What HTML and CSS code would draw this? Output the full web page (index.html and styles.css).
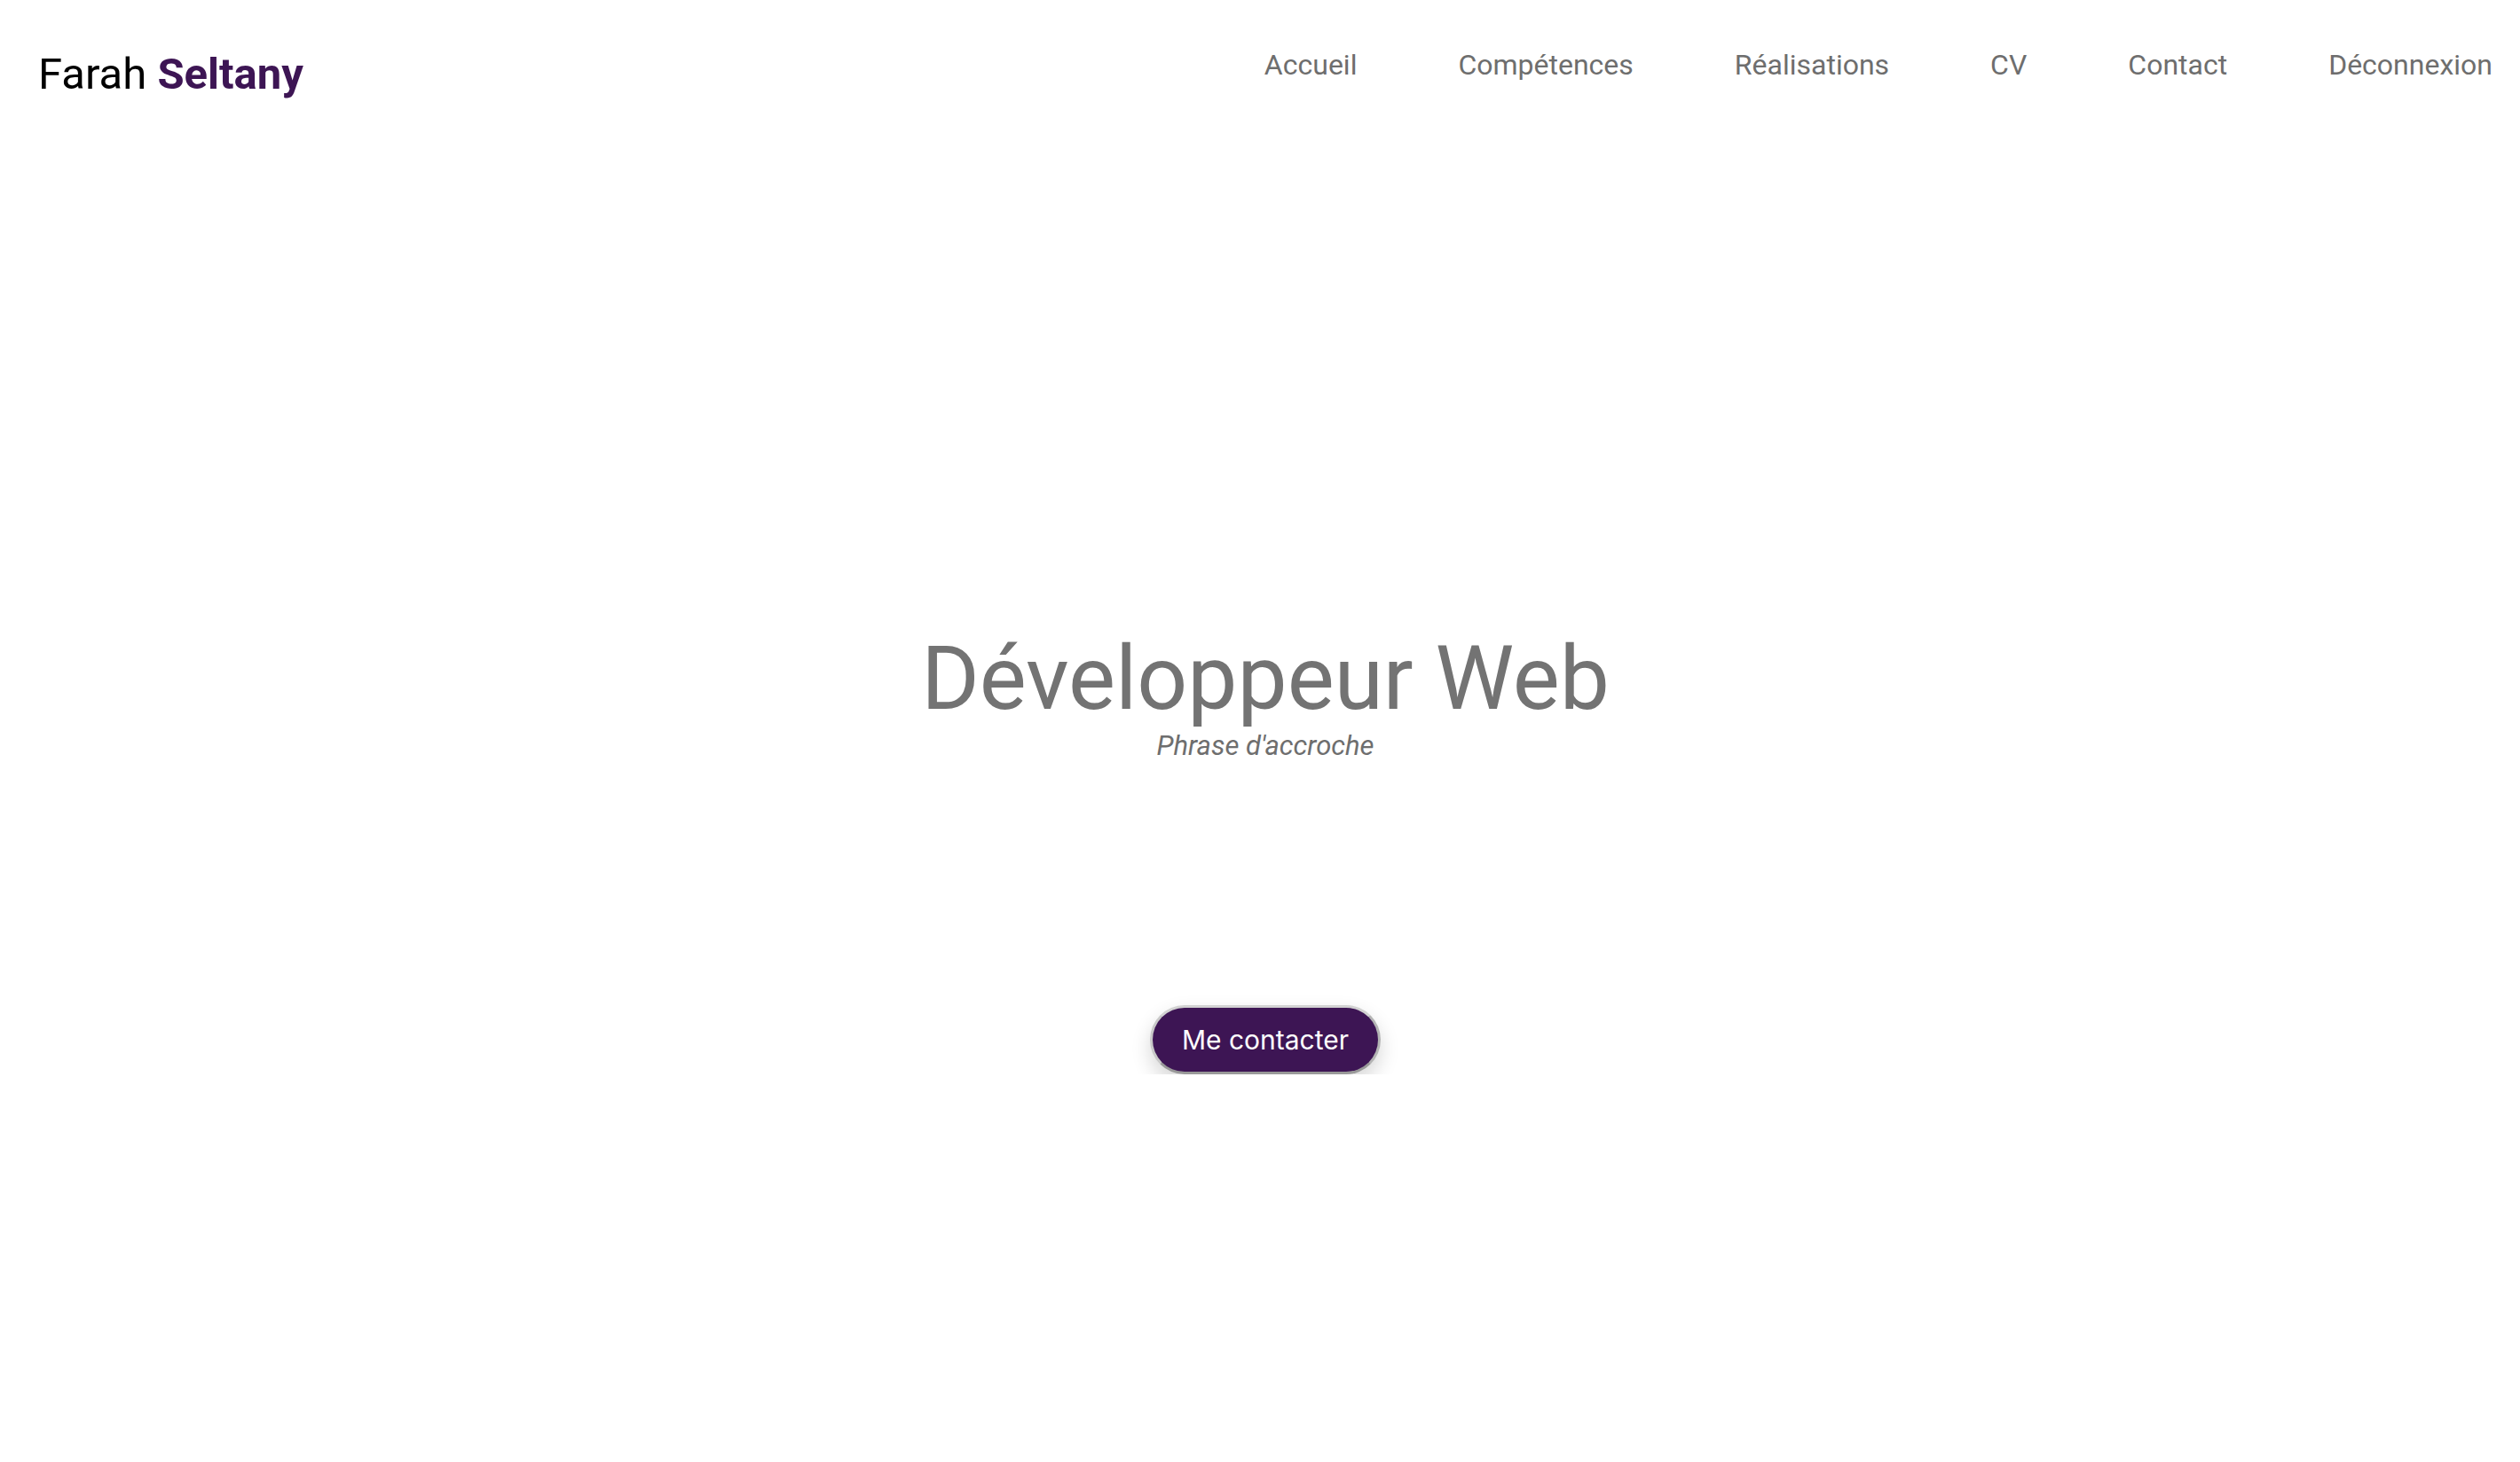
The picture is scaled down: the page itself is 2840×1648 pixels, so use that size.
FILE: index.html
```html
<!DOCTYPE html>
<html lang="fr">
<head>
<meta charset="utf-8">
<title>Farah Seltany</title>
<link rel="stylesheet" href="styles.css">
</head>
<body>
<header class="header">
  <div class="logo">Farah <strong class="logo-accent">Seltany</strong></div>
  <nav class="nav">
    <a class="nav-link" href="#">Accueil</a>
    <a class="nav-link" href="#">Compétences</a>
    <a class="nav-link" href="#">Réalisations</a>
    <a class="nav-link" href="#">CV</a>
    <a class="nav-link" href="#">Contact</a>
    <a class="nav-link" href="#">Déconnexion</a>
  </nav>
</header>
<main class="hero">
  <h1 class="hero-title">Développeur Web</h1>
  <p class="hero-sub">Phrase d'accroche</p>
  <button class="cta" type="button">Me contacter</button>
</main>
</body>
</html>
```
FILE: styles.css
```css
html, body {
  margin: 0;
  padding: 0;
  background: #ffffff;
}
body {
  font-family: Roboto, "Liberation Sans", sans-serif;
}
.header {
  display: flex;
  justify-content: space-between;
  align-items: flex-start;
  padding: 53px 31px 0 43px;
  height: 59px;
}
.logo {
  margin-top: 3px;
  font-size: 49px;
  line-height: 56px;
  color: #000000;
  font-weight: 400;
}
.logo-accent {
  font-weight: 700;
  color: #3d1554;
}
.nav {
  display: flex;
  gap: 114px;
}
.nav-link {
  font-size: 32px;
  line-height: 40px;
  color: #6e6e6e;
  text-decoration: none;
}
.hero {
  display: flex;
  flex-direction: column;
  align-items: center;
  padding: 594px 0 0 12px;
}
.hero-title {
  margin: 0;
  font-size: 100px;
  line-height: 117px;
  font-weight: 400;
  color: #737373;
}
.hero-sub {
  margin: 0;
  font-size: 31px;
  line-height: 35px;
  font-style: italic;
  color: #6e6e6e;
}
.cta {
  margin-top: 275px;
  font-family: Inter, "Noto Sans", sans-serif;
  font-size: 30px;
  line-height: 36px;
  color: #ffffff;
  background: #3d1554;
  padding: 18px 33px;
  border: 3px solid;
  border-color: #d2d2d2 #b4b4b4 #999999 #c8c8c8;
  border-radius: 40px;
  box-shadow: 0 10px 22px rgba(0, 0, 0, 0.16);
  cursor: pointer;
}
```
